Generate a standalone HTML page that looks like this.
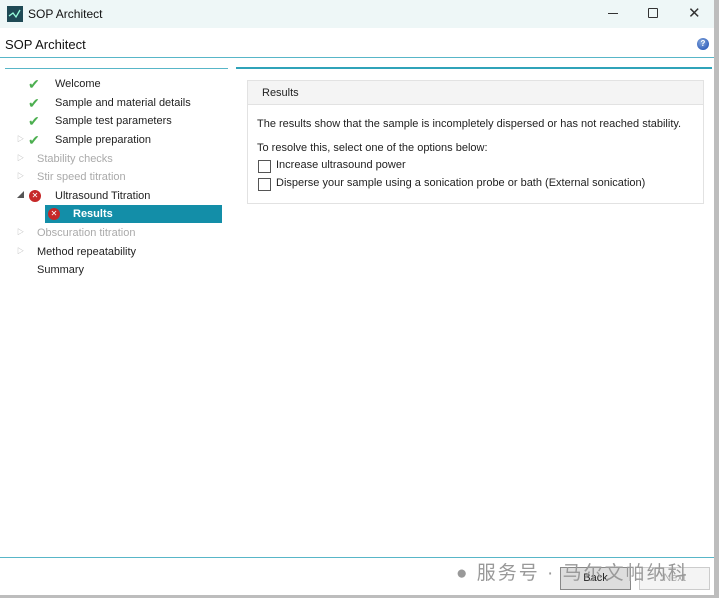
<!DOCTYPE html>
<html><head><style>
body{margin:0;width:719px;height:598px;overflow:hidden;background:#fff;font-family:"Liberation Sans","Noto Sans CJK SC",sans-serif;position:relative;font-size:11px;color:#222}
.a{position:absolute}
.tree div{position:absolute;left:0;height:18px;line-height:18px;font-size:11px;white-space:nowrap}
.g{color:#aaa}
.tree div.tri{left:17px;color:#aaa;font-size:7px}
</style></head><body>
<div class="a" style="left:0;top:0;width:714px;height:28px;background:#eef7f7"></div>
<div class="a" style="left:714px;top:0;width:5px;height:598px;background:#bdbdbd"></div>
<div class="a" style="left:7px;top:6px;width:16px;height:16px;background:#1f4a55"></div>
<svg class="a" style="left:8px;top:8px" width="14" height="12"><path d="M1 8 L5 5 L8 9 L12 2" stroke="#9fd" fill="none" stroke-width="1.3"/></svg>
<div class="a" style="left:28px;top:7px;font-size:12px;color:#111">SOP Architect</div>
<div class="a" style="left:608px;top:13px;width:10px;height:1px;background:#333"></div>
<div class="a" style="left:648px;top:8px;width:8px;height:8px;border:1.3px solid #333;border-radius:1px"></div>
<div class="a" style="left:688px;top:4px;font-size:15px;color:#333">✕</div>
<div class="a" style="left:5px;top:37px;font-size:13px;color:#111">SOP Architect</div>
<div class="a" style="left:697px;top:38px;width:12px;height:12px;border-radius:50%;background:radial-gradient(circle at 40% 35%,#8ad,#1547b0);color:#fff;font-size:8px;text-align:center;line-height:12px;font-weight:bold">?</div>
<div class="a" style="left:0;top:57px;width:714px;height:1px;background:#58b6c8"></div>
<div class="a" style="left:5px;top:68px;width:223px;height:1px;background:#58b6c8"></div>
<div class="a" style="left:236px;top:67px;width:476px;height:2px;background:#2fa3b9"></div>
<div class="tree a" style="left:0;top:75px;width:230px;height:300px">
<div style="top:0;left:28px;color:#4caf50;font-size:14px">✔</div><div style="top:0;left:55px">Welcome</div>
<div style="top:19px;left:28px;color:#4caf50;font-size:14px">✔</div><div style="top:19px;left:55px">Sample and material details</div>
<div style="top:37px;left:28px;color:#4caf50;font-size:14px">✔</div><div style="top:37px;left:55px">Sample test parameters</div>
<div class="tri" style="top:56px">▷</div><div style="top:56px;left:28px;color:#4caf50;font-size:14px">✔</div><div style="top:56px;left:55px">Sample preparation</div>
<div class="tri" style="top:75px">▷</div><div class="g" style="top:75px;left:37px">Stability checks</div>
<div class="tri" style="top:93px">▷</div><div class="g" style="top:93px;left:37px">Stir speed titration</div>
<div style="top:112px;left:17px;font-size:7px;color:#555">◢</div>
<div style="top:115px;left:29px;width:12px;height:12px;border-radius:50%;background:#c62828;color:#fff;font-size:8px;line-height:12px;text-align:center">✕</div>
<div style="top:112px;left:55px">Ultrasound Titration</div>
<div style="top:130px;left:45px;width:177px;height:18px;background:#138ea8"></div>
<div style="top:133px;left:48px;width:12px;height:12px;border-radius:50%;background:#c62828;color:#fff;font-size:8px;line-height:12px;text-align:center">✕</div>
<div style="top:130px;left:73px;color:#fff;font-weight:bold">Results</div>
<div class="tri" style="top:149px">▷</div><div class="g" style="top:149px;left:37px">Obscuration titration</div>
<div class="tri" style="top:168px">▷</div><div style="top:168px;left:37px">Method repeatability</div>
<div style="top:186px;left:37px">Summary</div>
</div>
<div class="a" style="left:247px;top:80px;width:455px;height:122px;border:1px solid #e2e2e2"></div>
<div class="a" style="left:248px;top:81px;width:455px;height:23px;background:#f4f4f4;border-bottom:1px solid #e2e2e2"></div>
<div class="a" style="left:262px;top:87px">Results</div>
<div class="a" style="left:257px;top:118px">The results show that the sample is incompletely dispersed or has not reached stability.</div>
<div class="a" style="left:257px;top:142px">To resolve this, select one of the options below:</div>
<div class="a" style="left:258px;top:160px;width:11px;height:11px;border:1px solid #555"></div>
<div class="a" style="left:276px;top:159px">Increase ultrasound power</div>
<div class="a" style="left:258px;top:178px;width:11px;height:11px;border:1px solid #555"></div>
<div class="a" style="left:276px;top:177px">Disperse your sample using a sonication probe or bath (External sonication)</div>
<div class="a" style="left:0;top:557px;width:714px;height:1px;background:#58b6c8"></div>
<div class="a" style="left:560px;top:567px;width:69px;height:21px;background:#ddd;border:1px solid #888;text-align:center;line-height:21px">Back</div>
<div class="a" style="left:639px;top:567px;width:69px;height:21px;background:#f4f4f4;border:1px solid #ccc;color:#aaa;text-align:center;line-height:21px">Next</div>
<div class="a" style="left:456px;top:558px;font-size:19px;color:#999;letter-spacing:2px;white-space:nowrap">● 服务号 · 马尔文帕纳科</div>
<div class="a" style="left:0;top:595px;width:719px;height:3px;background:#bdbdbd"></div>
</body></html>
